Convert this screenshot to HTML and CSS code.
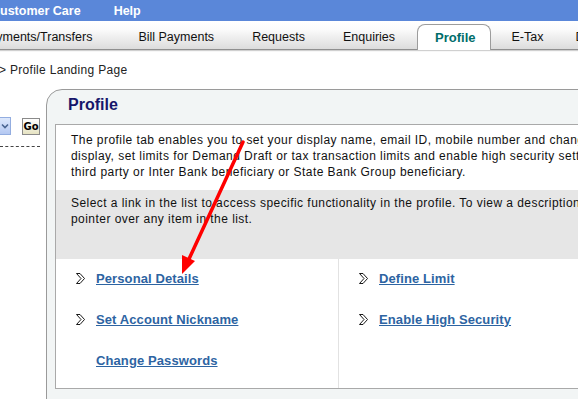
FILE: index.html
```html
<!DOCTYPE html>
<html lang="en">
<head>
  <meta charset="UTF-8">
  <meta name="viewport" content="width=device-width, initial-scale=1.0">
  <title>Profile Landing Page</title>
  <link rel="stylesheet" href="styles.css">
</head>
<body>
  <div class="topnav">
    <a class="top-link first" href="#">Customer Care</a>
    <a class="top-link" href="#">Help</a>
  </div>

  <div class="tabbar">
    <a class="tab first" href="#">Payments/Transfers</a>
    <a class="tab" href="#">Bill Payments</a>
    <a class="tab" href="#">Requests</a>
    <a class="tab" href="#">Enquiries</a>
    <a class="tab active" href="#">Profile</a>
    <a class="tab etax" href="#">E-Tax</a>
    <a class="tab" href="#">Demat</a>
  </div>

  <div class="crumb">&gt; Profile Landing Page</div>

  <div class="page">
    <div class="side">
      <div class="side-row">
        <div class="select-stub">
          <svg width="8" height="6" viewBox="0 0 8 6"><path d="M1 1.5 L4 4.5 L7 1.5" fill="none" stroke="#4a6591" stroke-width="1.6"/></svg>
        </div>
        <button class="go">Go</button>
      </div>
      <div class="dash"></div>
    </div>

    <div class="panel">
      <h2>Profile</h2>
      <div class="inner">
        <div class="desc">
          The profile tab enables you to set your display name, email ID, mobile number and change passwords, select primary account for<br>
          display, set limits for Demand Draft or tax transaction limits and enable high security settings for adding<br>
          third party or Inter Bank beneficiary or State Bank Group beneficiary.
        </div>
        <div class="note">
          Select a link in the list to access specific functionality in the profile. To view a description of the functionality, move the mouse<br>
          pointer over any item in the list.
        </div>
        <div class="links">
          <ul class="col">
            <li><span class="bullet"><svg width="9" height="11" viewBox="0 0 9 11"><path d="M0.5 0.5 H4 L8.5 5.5 L4 10.5 H0.5 L5 5.5 Z" fill="#fff" stroke="#000" stroke-width="0.9"/></svg></span><a href="#">Personal Details</a></li>
            <li><span class="bullet"><svg width="9" height="11" viewBox="0 0 9 11"><path d="M0.5 0.5 H4 L8.5 5.5 L4 10.5 H0.5 L5 5.5 Z" fill="#fff" stroke="#000" stroke-width="0.9"/></svg></span><a href="#">Set Account Nickname</a></li>
            <li><span class="bullet"></span><a href="#">Change Passwords</a></li>
          </ul>
          <ul class="col right">
            <li><span class="bullet"><svg width="9" height="11" viewBox="0 0 9 11"><path d="M0.5 0.5 H4 L8.5 5.5 L4 10.5 H0.5 L5 5.5 Z" fill="#fff" stroke="#000" stroke-width="0.9"/></svg></span><a href="#">Define Limit</a></li>
            <li><span class="bullet"><svg width="9" height="11" viewBox="0 0 9 11"><path d="M0.5 0.5 H4 L8.5 5.5 L4 10.5 H0.5 L5 5.5 Z" fill="#fff" stroke="#000" stroke-width="0.9"/></svg></span><a href="#">Enable High Security</a></li>
          </ul>
        </div>
      </div>
    </div>
  </div>

  <!-- red annotation arrow drawn over the page -->
  <svg class="pointer" width="578" height="399" viewBox="0 0 578 399">
    <line x1="243" y1="142" x2="189" y2="259" stroke="#ff0000" stroke-width="3.5" stroke-linecap="round"/>
    <polygon points="182,274 195,261 182,255" fill="#ff0000"/>
  </svg>
</body>
</html>
```

FILE: styles.css
```css
* {
  margin: 0;
  padding: 0;
  box-sizing: border-box;
}

body {
  font-family: "Liberation Sans", Arial, sans-serif;
  font-size: 12px;
  color: #111;
  background-color: #fff;
  width: 578px;
  height: 399px;
  overflow: hidden;
  position: relative;
}

a {
  text-decoration: none;
}

/* Top blue strip */
.topnav {
  display: flex;
  height: 21px;
  align-items: center;
  background-color: #5a87d9;
}

.top-link {
  color: #fff;
  font-weight: bold;
  font-size: 12.5px;
  margin-right: 33px;
}

.top-link.first {
  margin-left: -9px;
}

/* Tabs */
.tabbar {
  display: flex;
  align-items: flex-end;
  height: 29px;
  background: linear-gradient(#fff 0%, #fbfbfb 30%, #dcdcdc 100%);
  border-bottom: 1px solid #8f8f8f;
  box-shadow: 0 1px 1px #d0d0d0;
  white-space: nowrap;
}

.tab {
  height: 25px;
  line-height: 27px;
  padding: 0 19px;
  font-size: 12.5px;
  color: #111;
}

.tab.first {
  margin-left: -38px;
  padding-right: 27px;
}

.tab.active {
  height: 26px;
  margin-left: 3px;
  margin-bottom: -1px;
  padding: 0 14px 0 17px;
  line-height: 26px;
  background-color: #fff;
  border: 1px solid #9c9c9c;
  border-bottom: none;
  border-radius: 8px 8px 0 0;
  color: #006d6a;
  font-weight: bold;
  font-size: 13px;
}

.tab.etax {
  padding: 0 13px 0 21px;
}

/* Breadcrumb */
.crumb {
  margin-top: 12px;
  margin-left: -1px;
  line-height: 16px;
  letter-spacing: 0.3px;
  color: #222;
}

/* Page body */
.page {
  display: flex;
  margin-top: 11px;
}

.side {
  width: 46px;
  flex: none;
}

.side-row {
  display: flex;
  align-items: flex-start;
  margin-top: 28px;
}

.select-stub {
  width: 11px;
  height: 18px;
  display: flex;
  align-items: center;
  justify-content: center;
  background: linear-gradient(#dde8fc, #b4c8f2);
  border: 1px solid #93ade0;
  border-left: none;
}

.go {
  margin-left: 11px;
  margin-top: 1px;
  width: 18px;
  height: 17px;
  border: 1px solid #8a8a8a;
  background: linear-gradient(#ffffff, #e6e3c2);
  font-family: "DejaVu Sans", Verdana, sans-serif;
  font-weight: bold;
  font-size: 10px;
  color: #000;
  padding: 0;
}

.dash {
  width: 40px;
  margin-top: 11px;
  border-top: 1px dashed #444;
}

/* Profile panel */
.panel {
  flex: none;
  width: 640px;
  background-color: #f2f5f5;
  border: 1px solid #9a9a9a;
  border-top-left-radius: 16px;
  padding: 0 0 20px 8px;
}

.panel h2 {
  font-size: 16px;
  line-height: 30px;
  margin-bottom: 4px;
  padding-left: 13px;
  color: #16166a;
}

.inner {
  background-color: #fff;
  border: 1px solid #a9a9a9;
  white-space: nowrap;
}

.desc {
  padding: 7px 15px 10px;
  line-height: 16px;
  letter-spacing: 0.45px;
}

.note {
  padding: 5px 15px 32px;
  line-height: 16px;
  letter-spacing: 0.45px;
  background-color: #e6e6e6;
}

.links {
  display: flex;
}

.col {
  list-style: none;
  padding: 11px 0 20px 20px;
}

.col:first-child {
  width: 283px;
  border-right: 1px solid #e2e2e2;
}

.col li {
  display: flex;
  align-items: center;
  height: 16px;
  margin-bottom: 25px;
}

.col li:last-child {
  margin-bottom: 0;
}

.bullet {
  width: 9px;
  height: 11px;
  margin-right: 11px;
  display: flex;
}

.col a {
  font-weight: bold;
  font-size: 13px;
  letter-spacing: 0.1px;
  color: #2d64a2;
  text-decoration: underline;
}

/* Annotation arrow overlay */
.pointer {
  position: absolute;
  top: 0;
  left: 0;
  pointer-events: none;
}
```
